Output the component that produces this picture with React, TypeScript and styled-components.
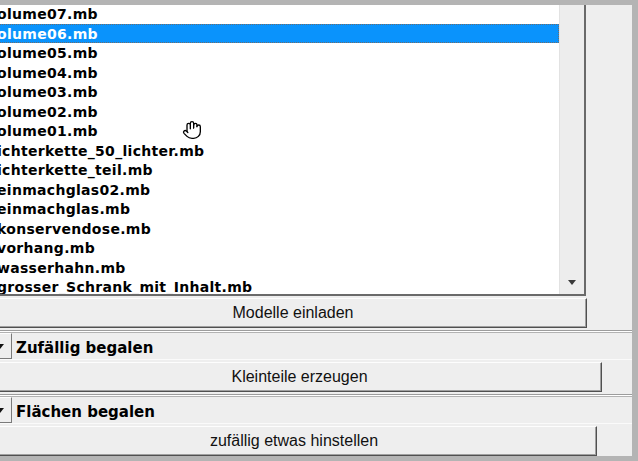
import React from "react";
import styled, { createGlobalStyle } from "styled-components";
import { Hand } from "lucide-react";

const GlobalStyles = createGlobalStyle`
  html, body {
    margin: 0;
    padding: 0;
  }
  body {
    width: 638px;
    height: 461px;
    overflow: hidden;
    background: #b4b4b4;
    font-family: "Liberation Sans", Arial, sans-serif;
  }
`;

const Frame = styled.div`
  position: relative;
  margin: 5px 0 0 -12px;
  width: 644px;
  height: 451px;
  background: #eeeeee;
  overflow: hidden;
  display: flex;
  flex-direction: column;
`;

const FileList = styled.div`
  margin-top: -1px;
  width: 598px;
  height: 292px;
  box-sizing: border-box;
  display: flex;
  background: #fff;
  border-right: 2px solid #6a6a6a;
  border-bottom: 2px solid #6a6a6a;
`;

const Rows = styled.div`
  flex: 1;
  overflow: hidden;
`;

const Row = styled.div<{ $selected?: boolean }>`
  height: 19.5px;
  line-height: 20.5px;
  padding-left: 9px;
  box-sizing: border-box;
  white-space: nowrap;
  font-family: "DejaVu Sans", Verdana, sans-serif;
  font-weight: bold;
  font-size: 14px;
  letter-spacing: 0.3px;
  color: ${(p) => (p.$selected ? "#fff" : "#000")};
  background: ${(p) => (p.$selected ? "#0a93fc" : "transparent")};
  outline: ${(p) => (p.$selected ? "1px dotted #6d6d6d" : "none")};
  outline-offset: -1px;
`;

const ScrollTrack = styled.div`
  width: 25px;
  box-sizing: border-box;
  background: #ededed;
  border-left: 1px solid #e2e2e2;
  display: flex;
  align-items: flex-end;
  justify-content: center;
`;

const DownArrow = styled.div`
  width: 0;
  height: 0;
  margin-bottom: 9px;
  border-left: 4.5px solid transparent;
  border-right: 4.5px solid transparent;
  border-top: 5px solid #3a3a3a;
`;

const Button = styled.button<{ $left: number; $width: number }>`
  display: block;
  margin: 2px 0 0 ${(p) => p.$left}px;
  width: ${(p) => p.$width}px;
  height: 30px;
  padding: 0;
  box-sizing: border-box;
  background: #eeeeee;
  border-top: 1px solid #fdfdfd;
  border-left: 1px solid #fdfdfd;
  border-right: 1px solid #505050;
  border-bottom: 1px solid #505050;
  box-shadow: inset -1px -1px 0 #a0a0a0;
  font-family: "Liberation Sans", Arial, sans-serif;
  font-size: 16px;
  color: #111;
`;

const Separator = styled.div`
  margin-top: 2px;
  width: 644px;
  height: 1px;
  border-top: 1px solid #9c9c9c;
  border-bottom: 1px solid #b2b2b2;
  background: #fff;
`;

const SectionHeader = styled.div`
  height: 26px;
  display: flex;
  align-items: stretch;
  gap: 4px;
  border-bottom: 1px solid #fafafa;
`;

const Toggle = styled.div`
  width: 24px;
  box-sizing: border-box;
  display: flex;
  align-items: center;
  justify-content: center;
  border-top: 1px solid #fdfdfd;
  border-left: 1px solid #fdfdfd;
  border-right: 1px solid #7a7a7a;
  border-bottom: 1px solid #7a7a7a;
  &::after {
    content: "";
    border-left: 4px solid transparent;
    border-right: 4px solid transparent;
    border-top: 5px solid #111;
  }
`;

const SectionTitle = styled.span`
  align-self: center;
  padding-top: 3px;
  font-family: "DejaVu Sans", Verdana, sans-serif;
  font-weight: bold;
  font-size: 15px;
  color: #000;
`;

const Cursor = styled.div`
  position: absolute;
  left: 194px;
  top: 115px;
  line-height: 0;
`;

const files = [
  "olume07.mb",
  "olume06.mb",
  "olume05.mb",
  "olume04.mb",
  "olume03.mb",
  "olume02.mb",
  "olume01.mb",
  "ichterkette_50_lichter.mb",
  "ichterkette_teil.mb",
  "einmachglas02.mb",
  "einmachglas.mb",
  "konservendose.mb",
  "vorhang.mb",
  "wasserhahn.mb",
  "grosser_Schrank_mit_Inhalt.mb",
];

const App = () => {
  return (
    <>
      <GlobalStyles />
      <Frame>
        <FileList>
          <Rows>
            {files.map((f, i) => (
              <Row key={f} $selected={i === 1}>
                {f}
              </Row>
            ))}
          </Rows>
          <ScrollTrack>
            <DownArrow />
          </ScrollTrack>
        </FileList>
        <Button $left={11} $width={588}>
          Modelle einladen
        </Button>

        <Separator />
        <SectionHeader>
          <Toggle />
          <SectionTitle>Zufällig begalen</SectionTitle>
        </SectionHeader>
        <Button $left={9} $width={605}>
          Kleinteile erzeugen
        </Button>

        <Separator />
        <SectionHeader>
          <Toggle />
          <SectionTitle>Flächen begalen</SectionTitle>
        </SectionHeader>
        <Button $left={3} $width={606}>
          zufällig etwas hinstellen
        </Button>

        <Cursor>
          <Hand size={20} color="#000" fill="#fff" strokeWidth={1.6} />
        </Cursor>
      </Frame>
    </>
  );
};

export default App;
